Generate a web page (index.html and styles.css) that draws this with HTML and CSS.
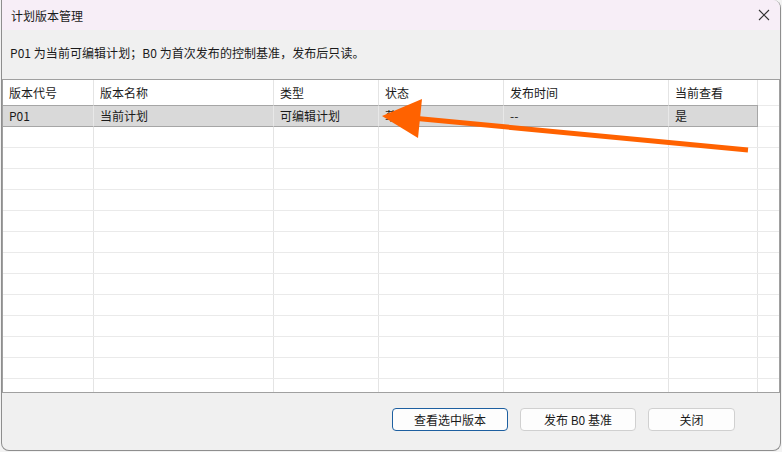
FILE: index.html
```html
<!DOCTYPE html>
<html lang="zh">
<head>
<meta charset="utf-8">
<title>计划版本管理</title>
<link rel="stylesheet" href="styles.css">
</head>
<body>
<div class="window">
  <div class="titlebar">
    <span class="title">计划版本管理</span>
    <svg class="close" width="12" height="12" viewBox="0 0 12 12"><path d="M1 1 L11 11 M11 1 L1 11" stroke="#333" stroke-width="1.1" fill="none"/></svg>
  </div>
  <div class="content">
    <div class="desc">P01 为当前可编辑计划；B0 为首次发布的控制基准，发布后只读。</div>
    <div class="table">
      <div class="row head">
        <div class="cell c1">版本代号</div>
        <div class="cell c2">版本名称</div>
        <div class="cell c3">类型</div>
        <div class="cell c4">状态</div>
        <div class="cell c5">发布时间</div>
        <div class="cell c6">当前查看</div>
        <div class="cell fill"></div>
      </div>
      <div class="row selrow">
        <div class="cell c1 sel">P01</div>
        <div class="cell c2 sel">当前计划</div>
        <div class="cell c3 sel">可编辑计划</div>
        <div class="cell c4 sel">草稿</div>
        <div class="cell c5 sel">--</div>
        <div class="cell c6 sel last">是</div>
        <div class="cell fill"></div>
      </div>
      <div class="row"><div class="cell c1"></div><div class="cell c2"></div><div class="cell c3"></div><div class="cell c4"></div><div class="cell c5"></div><div class="cell c6"></div><div class="cell fill"></div></div>
      <div class="row"><div class="cell c1"></div><div class="cell c2"></div><div class="cell c3"></div><div class="cell c4"></div><div class="cell c5"></div><div class="cell c6"></div><div class="cell fill"></div></div>
      <div class="row"><div class="cell c1"></div><div class="cell c2"></div><div class="cell c3"></div><div class="cell c4"></div><div class="cell c5"></div><div class="cell c6"></div><div class="cell fill"></div></div>
      <div class="row"><div class="cell c1"></div><div class="cell c2"></div><div class="cell c3"></div><div class="cell c4"></div><div class="cell c5"></div><div class="cell c6"></div><div class="cell fill"></div></div>
      <div class="row"><div class="cell c1"></div><div class="cell c2"></div><div class="cell c3"></div><div class="cell c4"></div><div class="cell c5"></div><div class="cell c6"></div><div class="cell fill"></div></div>
      <div class="row"><div class="cell c1"></div><div class="cell c2"></div><div class="cell c3"></div><div class="cell c4"></div><div class="cell c5"></div><div class="cell c6"></div><div class="cell fill"></div></div>
      <div class="row"><div class="cell c1"></div><div class="cell c2"></div><div class="cell c3"></div><div class="cell c4"></div><div class="cell c5"></div><div class="cell c6"></div><div class="cell fill"></div></div>
      <div class="row"><div class="cell c1"></div><div class="cell c2"></div><div class="cell c3"></div><div class="cell c4"></div><div class="cell c5"></div><div class="cell c6"></div><div class="cell fill"></div></div>
      <div class="row"><div class="cell c1"></div><div class="cell c2"></div><div class="cell c3"></div><div class="cell c4"></div><div class="cell c5"></div><div class="cell c6"></div><div class="cell fill"></div></div>
      <div class="row"><div class="cell c1"></div><div class="cell c2"></div><div class="cell c3"></div><div class="cell c4"></div><div class="cell c5"></div><div class="cell c6"></div><div class="cell fill"></div></div>
      <div class="row"><div class="cell c1"></div><div class="cell c2"></div><div class="cell c3"></div><div class="cell c4"></div><div class="cell c5"></div><div class="cell c6"></div><div class="cell fill"></div></div>
      <div class="row"><div class="cell c1"></div><div class="cell c2"></div><div class="cell c3"></div><div class="cell c4"></div><div class="cell c5"></div><div class="cell c6"></div><div class="cell fill"></div></div>
      <div class="row"><div class="cell c1"></div><div class="cell c2"></div><div class="cell c3"></div><div class="cell c4"></div><div class="cell c5"></div><div class="cell c6"></div><div class="cell fill"></div></div>
    </div>
    <div class="footer">
      <button class="btn default w1">查看选中版本</button>
      <button class="btn w2">发布 B0 基准</button>
      <button class="btn w3">关闭</button>
    </div>
  </div>
</div>
<svg class="arrow" width="782" height="452" viewBox="0 0 782 452">
  <line x1="412" y1="118" x2="748" y2="150" stroke="#ff6200" stroke-width="5"/>
  <polygon points="382,116 422,99 418,138" fill="#ff6200"/>
</svg>
</body>
</html>
```

FILE: styles.css
```css
html, body {
  margin: 0;
  padding: 0;
  background: #f3f3f3;
  width: 782px;
  height: 452px;
  overflow: hidden;
  font-family: "Noto Sans CJK SC", "Noto Sans", sans-serif;
  font-size: 12px;
  color: #1a1a1a;
}

.window {
  margin-left: 1px;
  width: 780px;
  height: 451px;
  box-sizing: border-box;
  border: 1px solid #8e8e8e;
  border-top: none;
  border-radius: 0 8px 8px 8px;
  overflow: hidden;
  display: flex;
  flex-direction: column;
  background: #f0f0f0;
}

.titlebar {
  height: 30px;
  flex: none;
  background: #f7eef7;
  display: flex;
  align-items: center;
  justify-content: space-between;
  padding: 0 10px 0 9px;
}

.title {
  font-size: 12px;
  color: #1a1a1a;
}

.content {
  flex: 1;
  display: flex;
  flex-direction: column;
}

.desc {
  height: 49px;
  line-height: 46px;
  padding-left: 8px;
  flex: none;
  letter-spacing: 0.05px;
}

.table {
  height: 314px;
  flex: none;
  box-sizing: border-box;
  border: 1px solid #a0a0a0;
  background: #fff;
  overflow: hidden;
}

.row {
  display: flex;
  height: 21px;
  box-sizing: border-box;
  border-bottom: 1px solid #eaeaea;
}

.row.head {
  height: 25px;
  border-bottom: none;
}

.row.selrow {
  height: 22px;
  border-bottom: none;
}

.cell {
  flex: none;
  box-sizing: border-box;
  border-right: 1px solid #e4e4e4;
  padding-left: 6px;
  line-height: 20px;
  white-space: nowrap;
  overflow: hidden;
}

.head .cell {
  line-height: 25px;
}

.c1 { width: 91px; padding-left: 6px; }
.c2 { width: 180px; }
.c3 { width: 105px; }
.c4 { width: 125px; }
.c5 { width: 165px; }
.c6 { width: 89px; }
.fill { flex: 1; border-right: none; }

.cell.sel {
  background: #d9d9d9;
  border-top: 1px solid #a6a6a6;
  border-bottom: 1px solid #a6a6a6;
  border-right-color: #e8e8e8;
}

.cell.sel.last {
  border-right: 1px solid #a6a6a6;
}

.selrow .fill {
  border-top: 1px solid #eaeaea;
  border-bottom: 1px solid #eaeaea;
}

.footer {
  display: flex;
  justify-content: flex-end;
  gap: 12px;
  padding: 15px 45px 0 0;
}

.btn {
  height: 23px;
  box-sizing: border-box;
  border: 1px solid #d0d0d0;
  border-radius: 4px;
  background: #fdfdfd;
  font-family: "Noto Sans CJK SC", "Noto Sans", sans-serif;
  font-size: 12px;
  color: #1a1a1a;
  padding: 0;
}

.btn.default {
  border-color: #1d5fa0;
}

.w1 { width: 116px; }
.w2 { width: 116px; }
.w3 { width: 87px; }

.arrow {
  position: absolute;
  left: 0;
  top: 0;
  pointer-events: none;
}
```
